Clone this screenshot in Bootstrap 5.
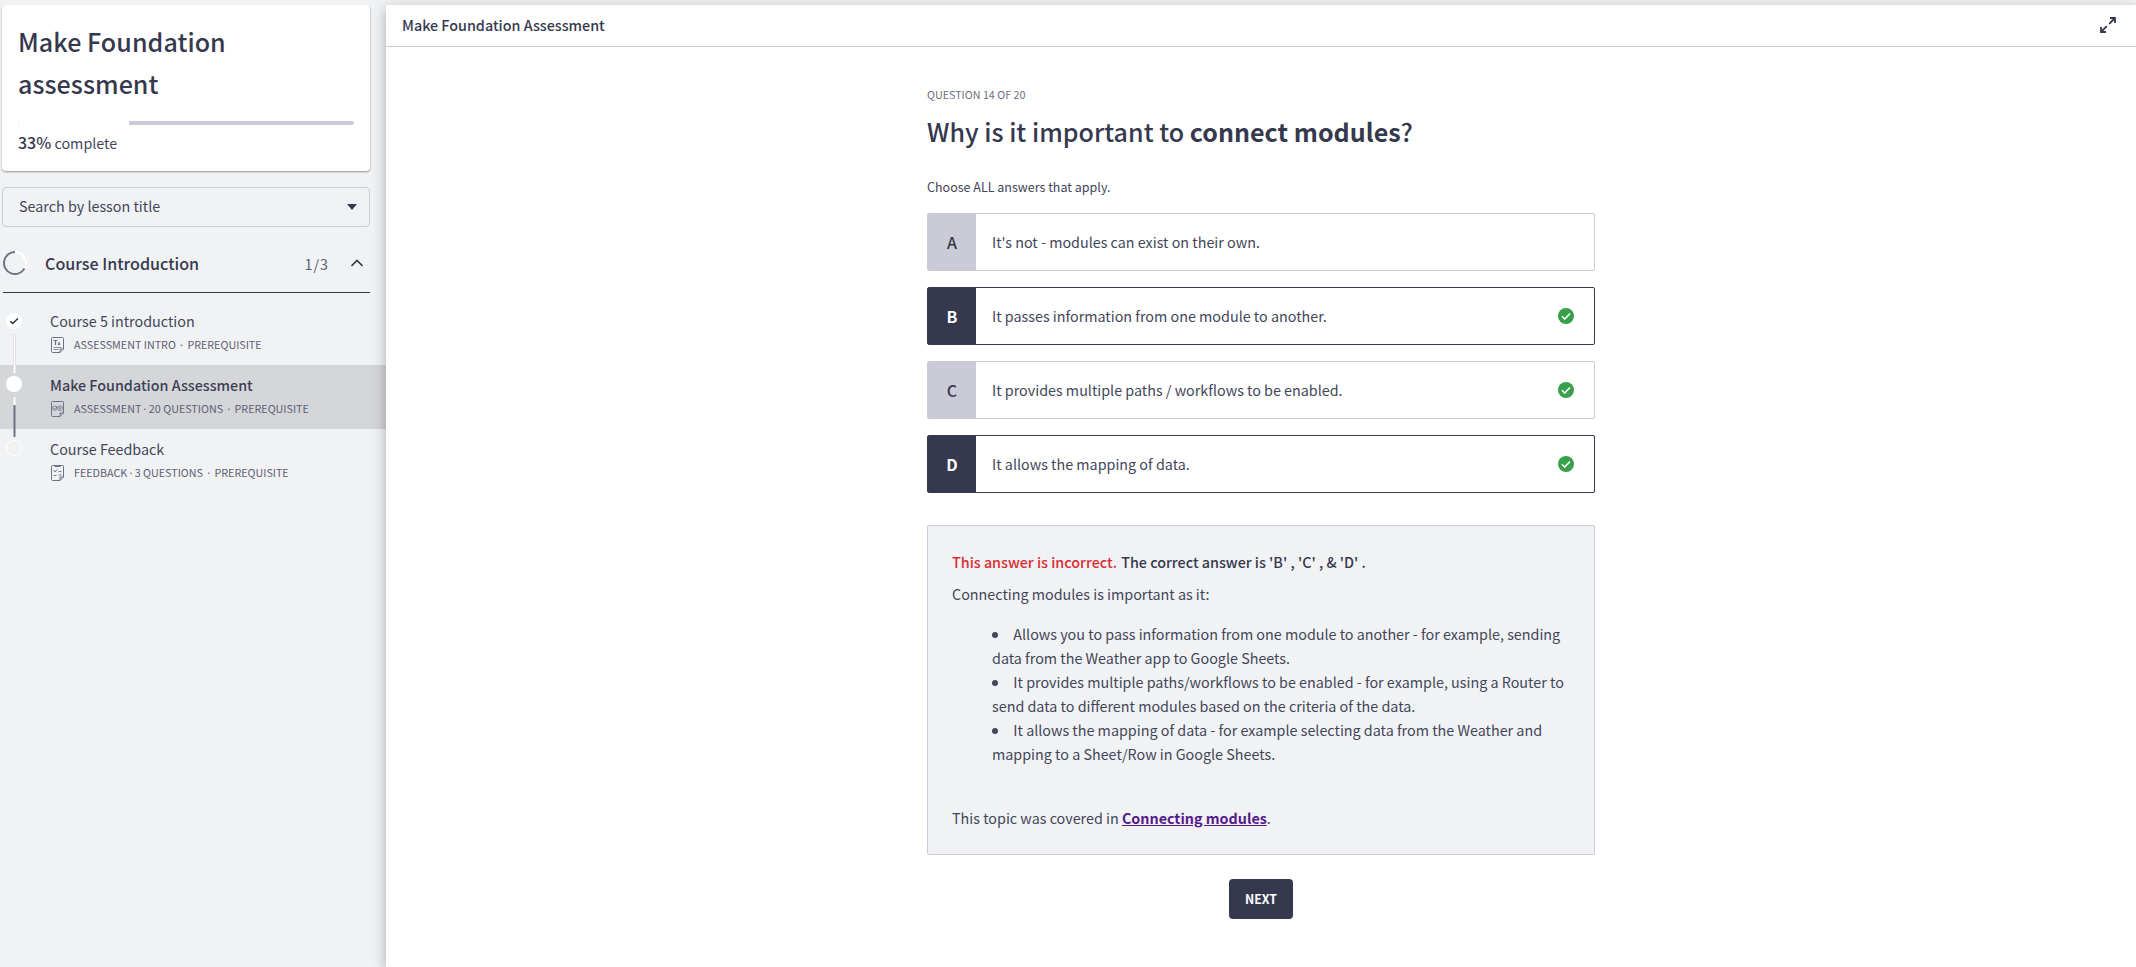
<!DOCTYPE html>
<html lang="en">
<head>
<meta charset="utf-8">
<meta name="viewport" content="width=device-width, initial-scale=1">
<title>Make Foundation Assessment</title>
<link href="https://cdn.jsdelivr.net/npm/bootstrap@5.3.0/dist/css/bootstrap.min.css" rel="stylesheet">
<style>
:root{--ink:#36394e;--text:#424659;--line:#cacbd7;--pale:#f1f2f4;}
body{font-family:"Noto Sans CJK JP","Noto Sans CJK SC",sans-serif;background:var(--pale);color:var(--text);font-size:14.33px;line-height:24px;}
.shell{height:967px;padding-top:5px;overflow:hidden;}
.sidebar{width:386px;flex:none;}
.progress-card{margin:0 16px 0 2px;height:166px;border-radius:4px;background:#fff;box-shadow:0 1px 2px rgba(0,0,0,.4);padding:15px 16px;}
.course-title{font-size:25.06px;letter-spacing:.05px;line-height:42px;font-weight:500;color:var(--ink);margin:0;}
.meter{height:4px;margin-top:17px;border-radius:2px;overflow:hidden;background:var(--line);}
.meter-done{height:4px;background:#fff;}
.done-label{margin-top:5px;}
.done-label b{font-size:16px;font-weight:500;color:var(--ink);}
.search-box{margin:16px 16px 0 2px;height:40px;border:1px solid var(--line);border-radius:4px;padding:0 12px 2px 16px;}
.search-box svg{margin-top:2px;}
.section-head{height:66px;margin:0 16px 0 3px;border-bottom:1px solid var(--ink);padding:7px 7px 0 0;}
.section-name{font-size:16.1px;font-weight:500;color:var(--ink);margin-left:18px;}
.count{letter-spacing:1px;color:#5d6072;padding-top:2px;margin-right:22px;}
.lessons{margin-top:8px;}
.lesson{height:64px;padding-left:6px;}
.lesson.active{background:#d5d6da;}
.lesson.active .lname{font-weight:500;color:#3d4055;}
.rail{width:44px;flex:none;}
.lname{line-height:24px;margin-top:8px;}
.lmeta{font-size:10.74px;line-height:16px;margin-top:4px;color:#5d6072;white-space:nowrap;}
.lmeta svg{margin:0 10px 0 1px;}
.sep{display:inline-block;width:11.500px;text-align:center;}
.sep.tight{width:7.500px;}
.content-panel{background:#fff;box-shadow:0 4px 13px rgba(0,0,0,.3);min-width:0;}
.topbar{height:42px;border-bottom:1px solid var(--line);padding:0 20px 2px 16px;}
.topbar span{font-weight:500;color:var(--ink);}
.quiz{width:668px;margin:0 auto;padding-top:38px;}
.qnum{font-size:10.74px;line-height:20px;color:#6b6e7c;}
.question{font-size:25.06px;letter-spacing:.01px;line-height:36px;margin:8px 0 0;font-weight:500;color:var(--ink);}
.hint{font-size:12.5px;line-height:20px;margin:28px 0 16px;}
.answer{height:58px;border:1px solid var(--line);border-radius:2px;margin-bottom:16px;padding-right:20px;}
.answer .key{width:48px;height:56px;background:var(--line);color:#36394e;font-size:16px;font-weight:500;margin-right:16px;}
.answer.picked{border-color:var(--ink);}
.answer.picked .key{background:var(--ink);color:#fff;font-weight:700;}
.explain{height:330px;margin-top:32px;border:1px solid var(--line);border-radius:2px;background:var(--pale);padding:24px 24px 0;}
.explain ul{list-style:inside disc;padding-left:40px;margin:16px 0 40px;}
.explain a{color:#551a8b;font-weight:700;}
.verdict{font-weight:500;color:var(--ink);}
.verdict .wrong{color:#d92d32;margin-right:1px;}
.btn-next{background:var(--ink);color:#fff;font-size:12.3px;font-weight:700;width:64px;height:40px;padding:0;border:0;border-radius:4px;margin-top:24px;}
</style>
</head>
<body>
<div class="shell d-flex">
<aside class="sidebar">
  <div class="progress-card">
    <h1 class="course-title">Make Foundation<br>assessment</h1>
    <div class="meter"><div class="meter-done" style="width:33%"></div></div>
    <div class="done-label"><b>33%</b> complete</div>
  </div>
  <div class="search-box d-flex align-items-center justify-content-between">
    <span>Search by lesson title</span>
    <svg width="10" height="6"><path d="M0 0h10L5 6z" fill="#36394e"/></svg>
  </div>
  <div class="section-head d-flex align-items-center">
    <svg width="24" height="24" viewBox="0 0 24 24" fill="none" stroke-width="2"><circle cx="12" cy="12" r="11" stroke="#fff"/><path d="M12 1A11 11 0 1 0 21.5 17.5" stroke="#6f7186"/></svg>
    <span class="section-name">Course Introduction</span>
    <span class="count ms-auto">1/3</span>
    <svg width="12" height="8" viewBox="0 0 12 8" fill="none" stroke="#36394e" stroke-width="1.6"><path d="M.5 7 6 1.5 11.500 7"/></svg>
  </div>
  <div class="lessons">
    <div class="lesson d-flex">
      <svg class="rail" width="44" height="64" viewBox="0 0 44 64"><circle cx="8" cy="20" r="8" fill="#fff"/><path d="m4.200 20.200 2.500 2.300 5.200-5" fill="none" stroke="#333" stroke-width="1.500"/><path d="M8.500 32v32" stroke="#d5d6da" stroke-width="3"/><path d="M8.500 32v32" stroke="#fff" stroke-width="1.500"/></svg>
      <div><div class="lname">Course 5 introduction</div>
      <div class="lmeta d-flex align-items-center"><svg width="13" height="16" viewBox="0 0 13 16" fill="none" stroke="#6f7186"><path d="M12.500 12V1.500a1 1 0 0 0-1-1h-10a1 1 0 0 0-1 1v13a1 1 0 0 0 1 1H9zM9 15.500V12h3.500"/><path d="M2.500 3.500h4M4.500 3.500V8M7 5.500 9 8M9 5.500 7 8" stroke-width="1.200"/><path d="M2.500 10.500h8M2.500 12.500h5" stroke-width=".8"/></svg><span>ASSESSMENT INTRO<span class="sep">·</span>PREREQUISITE</span></div></div>
    </div>
    <div class="lesson active d-flex">
      <svg class="rail" width="44" height="64" viewBox="0 0 44 64"><path d="M8.500 0v8" stroke="#fff" stroke-width="2"/><circle cx="8" cy="19" r="8" fill="#fff"/><path d="M8.500 32v9" stroke="#fff" stroke-width="2"/><path d="M8.500 40v24" stroke="#6f7186" stroke-width="2"/></svg>
      <div><div class="lname">Make Foundation Assessment</div>
      <div class="lmeta d-flex align-items-center"><svg width="13" height="16" viewBox="0 0 13 16" fill="none" stroke="#6f7186"><path d="M12.500 12V1.500a1 1 0 0 0-1-1h-10a1 1 0 0 0-1 1v13a1 1 0 0 0 1 1H9zM9 15.500V12h3.500"/><g stroke-width=".8"><circle cx="3.700" cy="7.200" r="2.200"/><circle cx="9" cy="7.200" r="2.400"/><path d="m2.700 7 1 1.200 3-3.200M8 6.200l2 2M10 6.200l-2 2"/></g></svg><span>ASSESSMENT<span class="sep tight">·</span>20 QUESTIONS<span class="sep">·</span>PREREQUISITE</span></div></div>
    </div>
    <div class="lesson d-flex">
      <svg class="rail" width="44" height="64" viewBox="0 0 44 64"><path d="M8.500 0v8" stroke="#6f7186" stroke-width="2"/><circle cx="8" cy="19" r="7.500" fill="none" stroke="#fff"/></svg>
      <div><div class="lname">Course Feedback</div>
      <div class="lmeta d-flex align-items-center"><svg width="13" height="16" viewBox="0 0 13 16" fill="none" stroke="#6f7186"><path d="M12.500 12V1.500a1 1 0 0 0-1-1h-10a1 1 0 0 0-1 1v13a1 1 0 0 0 1 1H9zM9 15.500V12h3.500"/><path d="M3.500 1h6" stroke-width="2"/><path d="m2.500 5 1.500 2 2-2.500M7.500 6.500h3M2.500 10.500h3M7.500 10h3" stroke-width=".9"/></svg><span>FEEDBACK<span class="sep tight">·</span>3 QUESTIONS<span class="sep">·</span>PREREQUISITE</span></div></div>
    </div>
  </div>
</aside>
<main class="content-panel flex-grow-1">
  <header class="topbar d-flex align-items-center justify-content-between">
    <span>Make Foundation Assessment</span>
    <svg width="16" height="16" viewBox="0 0 16 16" fill="none" stroke="#36394e" stroke-width="1.800"><path d="M9.200 6.800 15 1M10 1h5v5M6.800 9.200 1 15M1 10v5h5"/></svg>
  </header>
  <section class="quiz">
    <div class="qnum">QUESTION 14 OF 20</div>
    <h2 class="question">Why is it important to <b>connect modules</b>?</h2>
    <p class="hint">Choose ALL answers that apply.</p>
    <div class="answer d-flex align-items-center"><div class="key d-flex align-items-center justify-content-center">A</div><span>It's not - modules can exist on their own.</span></div>
    <div class="answer picked d-flex align-items-center"><div class="key d-flex align-items-center justify-content-center">B</div><span>It passes information from one module to another.</span><svg class="ms-auto" width="16" height="16"><circle cx="8" cy="8" r="8" fill="#38a04b"/><path d="m4 8.300 2.700 2.700 5.300-5.500" fill="none" stroke="#fff" stroke-width="1.600"/></svg></div>
    <div class="answer d-flex align-items-center"><div class="key d-flex align-items-center justify-content-center">C</div><span>It provides multiple paths / workflows to be enabled.</span><svg class="ms-auto" width="16" height="16"><circle cx="8" cy="8" r="8" fill="#38a04b"/><path d="m4 8.300 2.700 2.700 5.300-5.500" fill="none" stroke="#fff" stroke-width="1.600"/></svg></div>
    <div class="answer picked d-flex align-items-center"><div class="key d-flex align-items-center justify-content-center">D</div><span>It allows the mapping of data.</span><svg class="ms-auto" width="16" height="16"><circle cx="8" cy="8" r="8" fill="#38a04b"/><path d="m4 8.300 2.700 2.700 5.300-5.500" fill="none" stroke="#fff" stroke-width="1.600"/></svg></div>
    <div class="explain">
      <div class="verdict"><span class="wrong">This answer is incorrect.</span> The correct answer is 'B' , 'C' , &amp; 'D' .</div>
      <div class="mt-2">Connecting modules is important as it:</div>
      <ul>
        <li>Allows you to pass information from one module to another - for example, sending data from the Weather app to Google Sheets.</li>
        <li>It provides multiple paths/workflows to be enabled - for example, using a Router to send data to different modules based on the criteria of the data.</li>
        <li>It allows the mapping of data - for example selecting data from the Weather and mapping to a Sheet/Row in Google Sheets.</li>
      </ul>
      <div>This topic was covered in <a href="#">Connecting modules</a>.</div>
    </div>
    <div class="text-center"><button class="btn btn-next">NEXT</button></div>
  </section>
</main>
</div>
<script src="https://cdn.jsdelivr.net/npm/bootstrap@5.3.0/dist/js/bootstrap.bundle.min.js"></script>
</body>
</html>
